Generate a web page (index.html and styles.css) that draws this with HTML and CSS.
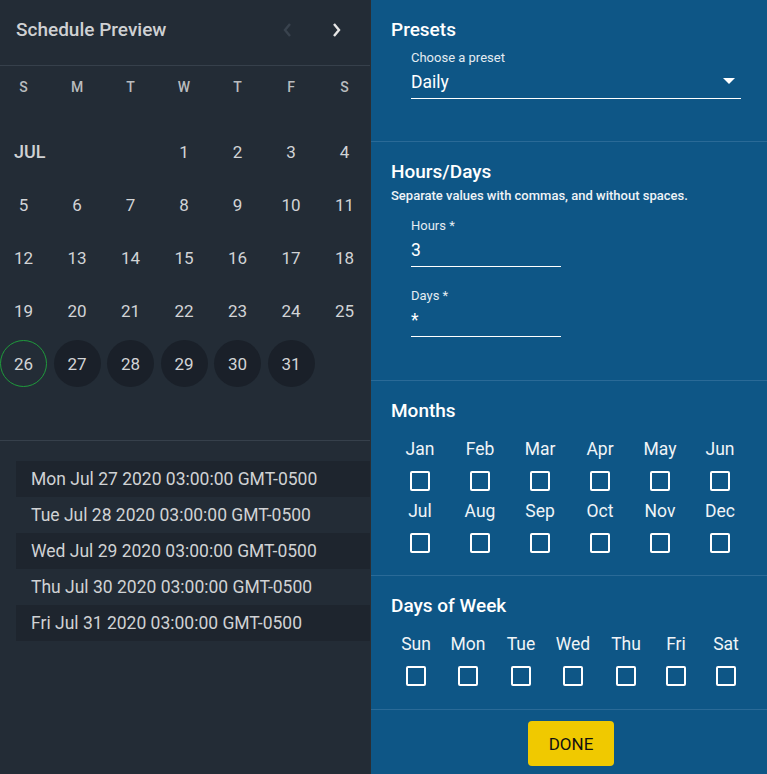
FILE: index.html
```html
<!DOCTYPE html>
<html lang="en">
<head>
  <meta charset="UTF-8">
  <title>Schedule Editor</title>
  <link rel="stylesheet" href="styles.css">
</head>
<body>
  <div class="app">
    <div class="preview">
      <div class="preview-header">
        <h2>Schedule Preview</h2>
        <div class="nav">
          <span class="nav-btn disabled">
            <svg width="10" height="16" viewBox="0 0 10 16"><path d="M8 2 L3 8 L8 14" fill="none" stroke="currentColor" stroke-width="2.4"/></svg>
          </span>
          <span class="nav-btn">
            <svg width="10" height="16" viewBox="0 0 10 16"><path d="M2 2 L7 8 L2 14" fill="none" stroke="currentColor" stroke-width="2.4"/></svg>
          </span>
        </div>
      </div>
      <div class="weekdays">
        <span>S</span><span>M</span><span>T</span><span>W</span><span>T</span><span>F</span><span>S</span>
      </div>
      <div class="calendar">
        <div class="month-label">JUL</div>
        <div class="day">1</div><div class="day">2</div><div class="day">3</div><div class="day">4</div>
        <div class="day">5</div><div class="day">6</div><div class="day">7</div><div class="day">8</div><div class="day">9</div><div class="day">10</div><div class="day">11</div>
        <div class="day">12</div><div class="day">13</div><div class="day">14</div><div class="day">15</div><div class="day">16</div><div class="day">17</div><div class="day">18</div>
        <div class="day">19</div><div class="day">20</div><div class="day">21</div><div class="day">22</div><div class="day">23</div><div class="day">24</div><div class="day">25</div>
        <div class="day today">26</div><div class="day run">27</div><div class="day run">28</div><div class="day run">29</div><div class="day run">30</div><div class="day run">31</div>
        <div class="day empty"></div>
      </div>
      <ul class="runs">
        <li>Mon Jul 27 2020 03:00:00 GMT-0500</li>
        <li>Tue Jul 28 2020 03:00:00 GMT-0500</li>
        <li>Wed Jul 29 2020 03:00:00 GMT-0500</li>
        <li>Thu Jul 30 2020 03:00:00 GMT-0500</li>
        <li>Fri Jul 31 2020 03:00:00 GMT-0500</li>
      </ul>
    </div>

    <div class="config">
      <section class="block presets">
        <h3>Presets</h3>
        <div class="field wide">
          <label>Choose a preset</label>
          <div class="value select">Daily <span class="arrow"></span></div>
        </div>
      </section>

      <section class="block hours">
        <h3>Hours/Days</h3>
        <p class="hint">Separate values with commas, and without spaces.</p>
        <div class="field">
          <label>Hours *</label>
          <div class="value">3</div>
        </div>
        <div class="field">
          <label>Days *</label>
          <div class="value">*</div>
        </div>
      </section>

      <section class="block months">
        <h3>Months</h3>
        <div class="checks six">
          <div class="check"><span>Jan</span><i></i></div>
          <div class="check"><span>Feb</span><i></i></div>
          <div class="check"><span>Mar</span><i></i></div>
          <div class="check"><span>Apr</span><i></i></div>
          <div class="check"><span>May</span><i></i></div>
          <div class="check"><span>Jun</span><i></i></div>
          <div class="check"><span>Jul</span><i></i></div>
          <div class="check"><span>Aug</span><i></i></div>
          <div class="check"><span>Sep</span><i></i></div>
          <div class="check"><span>Oct</span><i></i></div>
          <div class="check"><span>Nov</span><i></i></div>
          <div class="check"><span>Dec</span><i></i></div>
        </div>
      </section>

      <section class="block week">
        <h3>Days of Week</h3>
        <div class="checks seven">
          <div class="check"><span>Sun</span><i></i></div>
          <div class="check"><span>Mon</span><i></i></div>
          <div class="check"><span>Tue</span><i></i></div>
          <div class="check"><span>Wed</span><i></i></div>
          <div class="check"><span>Thu</span><i></i></div>
          <div class="check"><span>Fri</span><i></i></div>
          <div class="check"><span>Sat</span><i></i></div>
        </div>
      </section>

      <div class="footer">
        <button class="done">DONE</button>
      </div>
    </div>
  </div>
</body>
</html>
```

FILE: styles.css
```css
body {
  margin: 0;
  font-family: Roboto, "Noto Sans", Arial, sans-serif;
  overflow: hidden;
}
.app {
  display: flex;
  height: 774px;
}

/* left: preview */
.preview {
  width: 370px;
  flex-shrink: 0;
  background: #232c36;
  color: #d2d4d6;
  overflow: hidden;
}
.preview-header {
  height: 66px;
  box-sizing: border-box;
  padding: 19px 16px 0 16px;
  display: flex;
  justify-content: space-between;
  align-items: flex-start;
  border-bottom: 1px solid #36404b;
}
.preview-header h2 {
  margin: 0;
  font-size: 19px;
  font-weight: 500;
  color: #cfd1d3;
  line-height: 22px;
}
.nav {
  display: flex;
  gap: 40px;
  padding-top: 3px;
  padding-right: 12px;
}
.nav-btn {
  color: #e6e6e6;
  display: flex;
}
.nav-btn.disabled {
  color: #39434e;
}
.weekdays {
  display: grid;
  grid-template-columns: repeat(7, 47px);
  column-gap: 6.5px;
  padding-top: 11px;
  height: 20px;
  font-size: 14px;
  font-weight: 500;
  color: #b9bcbf;
  text-align: center;
  line-height: 20px;
}
.calendar {
  display: grid;
  grid-template-columns: repeat(7, 47px);
  grid-auto-rows: 47px;
  gap: 6px 6.5px;
  padding-top: 31px;
  border-bottom: 1px solid #36404b;
}
.month-label {
  grid-column: span 3;
  font-size: 18px;
  font-weight: 500;
  padding-left: 14px;
  line-height: 47px;
  color: #cfd1d3;
}
.day {
  display: flex;
  align-items: center;
  justify-content: center;
  border-radius: 50%;
  font-size: 17px;
  color: #d2d4d6;
}
.day.run {
  background: #1a2029;
}
.day.today {
  border: 1px solid #1f9a3c;
  box-sizing: border-box;
}
.day.empty {
  grid-column: 1;
}
.runs {
  list-style: none;
  margin: 20px 0 0 16px;
  padding: 0;
}
.runs li {
  height: 36px;
  line-height: 36px;
  padding-left: 15px;
  font-size: 17.5px;
  color: #d0d2d4;
  white-space: nowrap;
}
.runs li:nth-child(odd) {
  background: #1e252e;
}

/* right: config */
.config {
  flex: 1;
  background: #0e5686;
  border-left: 1px solid #2a2e33;
  color: #fff;
  display: flex;
  flex-direction: column;
}
.block {
  border-bottom: 1px solid #2a6a97;
  padding: 19px 20px 0 20px;
  box-sizing: border-box;
}
.block h3 {
  margin: 0;
  font-size: 19px;
  font-weight: 500;
  line-height: 22px;
}
.presets { height: 142px; }
.hours { height: 239px; }
.months { height: 195px; }
.week { height: 134px; }
.field {
  margin-left: 20px;
  width: 150px;
  border-bottom: 1px solid #fff;
}
.field.wide {
  width: 330px;
  margin-top: 9px;
}
.field label {
  display: block;
  font-size: 13px;
  color: #e4ecf2;
  line-height: 16px;
}
.value {
  font-size: 17.5px;
  line-height: 22px;
  padding: 5px 0 5px 0;
}
.select {
  position: relative;
}
.arrow {
  position: absolute;
  right: 6px;
  top: 12px;
  border-left: 6px solid transparent;
  border-right: 6px solid transparent;
  border-top: 6px solid #fff;
}
.hint {
  margin: 5px 0 14px 0;
  font-size: 13px;
  font-weight: 500;
  line-height: 16px;
  color: #eef3f7;
}
.hours .field + .field {
  margin-top: 21px;
}
.checks {
  display: grid;
}
.checks.six {
  grid-template-columns: repeat(6, 60px);
  row-gap: 10px;
  margin-top: 17px;
  margin-left: -1px;
}
.checks.seven {
  grid-template-columns: 52px 52px 54px 50px 56px 44px 56px;
  margin-top: 17px;
  margin-left: -1px;
}
.check {
  display: flex;
  flex-direction: column;
  align-items: center;
  font-size: 17.5px;
  line-height: 20px;
  color: #f0f4f7;
}
.check i {
  display: block;
  width: 16px;
  height: 16px;
  border: 2px solid #fff;
  border-radius: 2px;
  margin-top: 12px;
}
.footer {
  display: flex;
  justify-content: center;
  padding-top: 11px;
  padding-right: 3px;
}
.done {
  width: 86px;
  height: 45px;
  background: #f0c900;
  border: none;
  border-radius: 4px;
  font-family: Roboto, Arial, sans-serif;
  font-size: 17px;
  color: #111;
}
```
